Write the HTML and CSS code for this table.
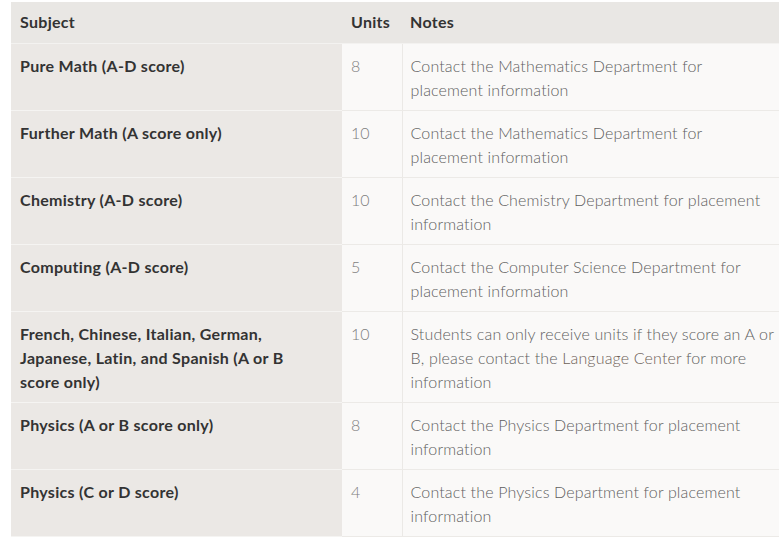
FILE: index.html
```html
<!DOCTYPE html>
<html lang="en">
<head>
<meta charset="utf-8">
<title>Placement units</title>
<link rel="stylesheet" href="styles.css">
</head>
<body>
<table class="units-table">
  <colgroup>
    <col class="c-subject">
    <col class="c-units">
    <col class="c-notes">
  </colgroup>
  <thead>
    <tr>
      <th>Subject</th>
      <th>Units</th>
      <th class="h-notes">Notes</th>
    </tr>
  </thead>
  <tbody>
    <tr>
      <td class="subject">Pure Math (A-D score)</td>
      <td class="units">8</td>
      <td class="notes">Contact the Mathematics Department for placement information</td>
    </tr>
    <tr>
      <td class="subject">Further Math (A score only)</td>
      <td class="units">10</td>
      <td class="notes">Contact the Mathematics Department for placement information</td>
    </tr>
    <tr>
      <td class="subject">Chemistry (A-D score)</td>
      <td class="units">10</td>
      <td class="notes">Contact the Chemistry Department for placement information</td>
    </tr>
    <tr>
      <td class="subject">Computing (A-D score)</td>
      <td class="units">5</td>
      <td class="notes">Contact the Computer Science Department for placement information</td>
    </tr>
    <tr>
      <td class="subject">French, Chinese, Italian, German, Japanese, Latin, and Spanish (A or B score only)</td>
      <td class="units">10</td>
      <td class="notes">Students can only receive units if they score an A or B, please contact the <a class="link" href="#">Language Center</a> for more information</td>
    </tr>
    <tr>
      <td class="subject">Physics (A or B score only)</td>
      <td class="units">8</td>
      <td class="notes">Contact the Physics Department for placement information</td>
    </tr>
    <tr>
      <td class="subject">Physics (C or D score)</td>
      <td class="units">4</td>
      <td class="notes">Contact the Physics Department for placement information</td>
    </tr>
  </tbody>
</table>
</body>
</html>
```

FILE: styles.css
```css
html, body {
  background: #ffffff;
}
body {
  margin: 2px 0 0 11px;
  font-family: "Lato", "Source Sans Pro", "Liberation Sans", sans-serif;
  font-size: 16px;
  line-height: 24px;
  overflow: hidden;
}
.units-table {
  border-collapse: collapse;
  width: 768px;
  table-layout: fixed;
}
.c-subject { width: 331px; }
.c-units { width: 60px; }
.units-table th {
  background: #e9e7e4;
  color: #333333;
  font-weight: 700;
  letter-spacing: 0.3px;
  text-align: left;
  padding: 8px 9px 9px;
  border-bottom: 1px solid #f3f2f0;
}
.units-table th.h-notes {
  padding-left: 8px;
}
.units-table td {
  vertical-align: top;
  padding: 10px 9px 8px;
  border-bottom: 1px solid #eceae7;
}
.subject {
  background: #ebe8e5;
  color: #333333;
  font-weight: 700;
  letter-spacing: 0.3px;
  padding-right: 24px !important;
  border-bottom-color: #f5f4f2 !important;
}
.units {
  background: #faf9f8;
  color: #7e7e7e;
  font-weight: 300;
  border-right: 1px solid #ebe9e6;
}
.notes {
  background: #faf9f8;
  color: #5f5f5f;
  font-weight: 300;
  letter-spacing: 0.15px;
  padding-left: 8px !important;
  padding-right: 4px !important;
}
.link {
  color: #6d6157;
  text-decoration: none;
}
```
